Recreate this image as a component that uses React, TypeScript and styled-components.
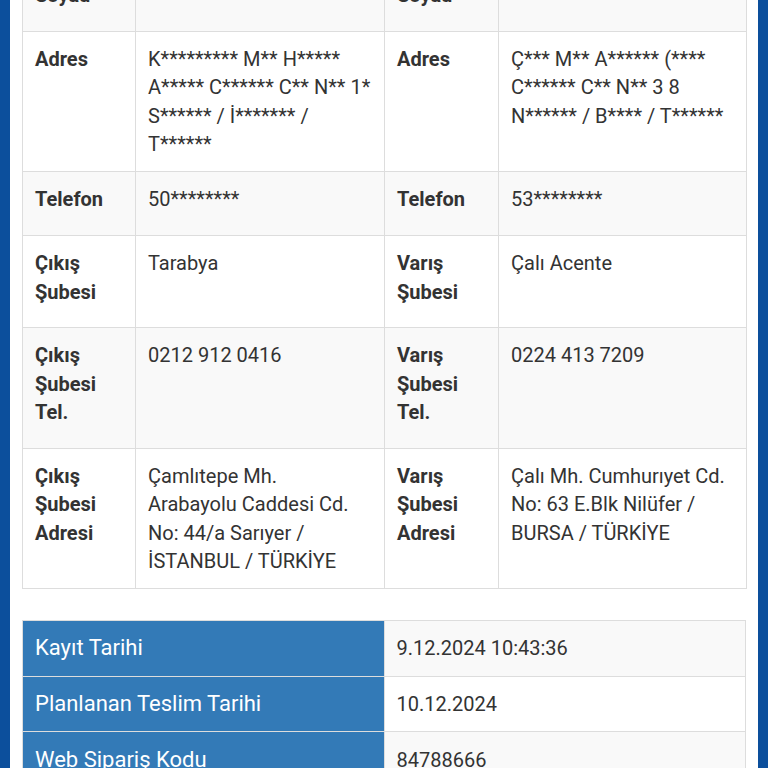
import React from 'react';
import styled, { createGlobalStyle } from 'styled-components';

const Global = createGlobalStyle`
  html, body { margin: 0; padding: 0; background: #0c4f9c; }
  body { font-family: Roboto, "Noto Sans", "Liberation Sans", sans-serif; overflow: hidden; }
`;

const Frame = styled.div`
  margin: -61px 10px 0;
  background: #ffffff;
  padding: 0 12px 60px;
  min-height: 900px;
`;

const InfoTable = styled.table`
  width: 724px;
  border-collapse: collapse;
  table-layout: fixed;
  margin-bottom: 31px;
  border: 1px solid #ddd;

  tbody tr:nth-child(odd) { background: #f9f9f9; }
  tbody tr:nth-child(even) { background: #ffffff; }
`;

const Cell = styled.td<{ $head?: boolean; $extra?: boolean }>`
  border: 1px solid #ddd;
  padding: 13px 12px ${p => (p.$extra ? 21.6 : 13)}px;
  vertical-align: top;
  font-size: 20px;
  line-height: 28.3px;
  color: #333;
  font-weight: ${p => (p.$head ? 700 : 400)};
`;

const Line = styled.span`
  display: block;
  white-space: nowrap;
`;

const DateTable = styled.table`
  width: 724px;
  border-collapse: collapse;
  table-layout: fixed;
  border: 1px solid #ddd;

  tbody tr:nth-child(odd) td:last-child { background: #f9f9f9; }
  tbody tr:nth-child(even) td:last-child { background: #ffffff; }
`;

const DateCell = styled.td<{ $key?: boolean }>`
  border: 1px solid #ddd;
  padding: 13.3px 12px 13px;
  vertical-align: top;
  font-size: ${p => (p.$key ? 22 : 20)}px;
  line-height: 28.3px;
  color: ${p => (p.$key ? '#ffffff' : '#333')};
  background: ${p => (p.$key ? '#337ab7' : 'transparent')};
  white-space: nowrap;
`;

type Row = { l1: string[]; v1: string[]; l2: string[]; v2: string[]; extra: boolean };

const rows: Row[] = [
  { l1: ['Ad', 'Soyad'], v1: ['M*** K*****'], l2: ['Ad', 'Soyad'], v2: ['A*** Y*****'], extra: true },
  {
    l1: ['Adres'],
    v1: ['K********* M** H*****', 'A***** C****** C** N** 1*', 'S****** / İ******* /', 'T******'],
    l2: ['Adres'],
    v2: ['Ç*** M** A****** (****', 'C****** C** N** 3 8', 'N****** / B**** / T******'],
    extra: false,
  },
  { l1: ['Telefon'], v1: ['50********'], l2: ['Telefon'], v2: ['53********'], extra: true },
  { l1: ['Çıkış', 'Şubesi'], v1: ['Tarabya'], l2: ['Varış', 'Şubesi'], v2: ['Çalı Acente'], extra: true },
  {
    l1: ['Çıkış', 'Şubesi', 'Tel.'],
    v1: ['0212 912 0416'],
    l2: ['Varış', 'Şubesi', 'Tel.'],
    v2: ['0224 413 7209'],
    extra: true,
  },
  {
    l1: ['Çıkış', 'Şubesi', 'Adresi'],
    v1: ['Çamlıtepe Mh.', 'Arabayolu Caddesi Cd.', 'No: 44/a Sarıyer /', 'İSTANBUL / TÜRKİYE'],
    l2: ['Varış', 'Şubesi', 'Adresi'],
    v2: ['Çalı Mh. Cumhurıyet Cd.', 'No: 63 E.Blk Nilüfer /', 'BURSA / TÜRKİYE'],
    extra: false,
  },
];

const dates = [
  ['Kayıt Tarihi', '9.12.2024 10:43:36'],
  ['Planlanan Teslim Tarihi', '10.12.2024'],
  ['Web Sipariş Kodu', '84788666'],
  ['Teslim Tarihi', '10.12.2024'],
];

const Lines = ({ items }: { items: string[] }) => (
  <>
    {items.map((t, i) => (
      <Line key={i}>{t}</Line>
    ))}
  </>
);

export default function App() {
  return (
    <>
      <Global />
      <Frame>
        <InfoTable>
          <colgroup>
            <col style={{ width: 113 }} />
            <col style={{ width: 249 }} />
            <col style={{ width: 114 }} />
            <col style={{ width: 248 }} />
          </colgroup>
          <tbody>
            {rows.map((r, i) => (
              <tr key={i}>
                <Cell $head $extra={r.extra}><Lines items={r.l1} /></Cell>
                <Cell $extra={r.extra}><Lines items={r.v1} /></Cell>
                <Cell $head $extra={r.extra}><Lines items={r.l2} /></Cell>
                <Cell $extra={r.extra}><Lines items={r.v2} /></Cell>
              </tr>
            ))}
          </tbody>
        </InfoTable>
        <DateTable>
          <tbody>
            {dates.map(([k, v], i) => (
              <tr key={i}>
                <DateCell $key>{k}</DateCell>
                <DateCell>{v}</DateCell>
              </tr>
            ))}
          </tbody>
        </DateTable>
      </Frame>
    </>
  );
}
